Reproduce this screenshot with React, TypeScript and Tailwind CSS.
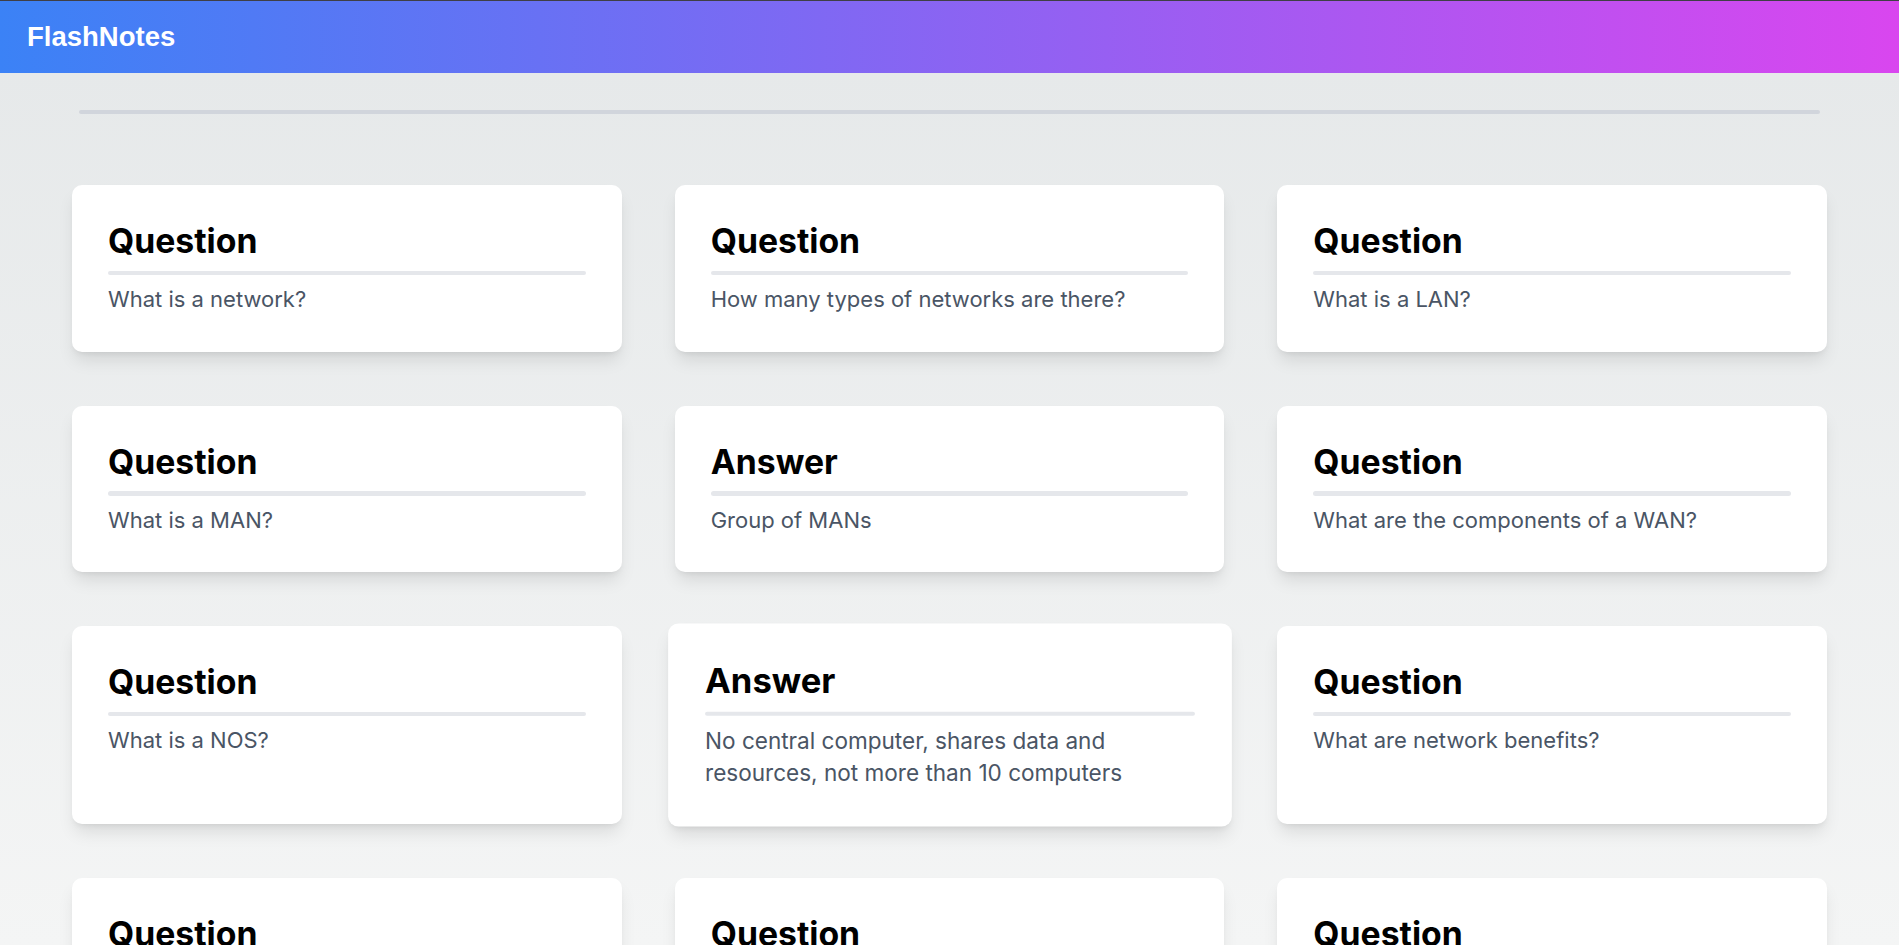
const cards = [
  { side: 'Question', text: 'What is a network?' },
  { side: 'Question', text: 'How many types of networks are there?' },
  { side: 'Question', text: 'What is a LAN?' },
  { side: 'Question', text: 'What is a MAN?' },
  { side: 'Answer', text: 'Group of MANs' },
  { side: 'Question', text: 'What are the components of a WAN?' },
  { side: 'Question', text: 'What is a NOS?' },
  { side: 'Answer', text: 'No central computer, shares data and resources, not more than 10 computers', active: true },
  { side: 'Question', text: 'What are network benefits?' },
  { side: 'Question', text: 'What is a peer-to-peer network?' },
  { side: 'Question', text: 'What is a client/server network?' },
  { side: 'Question', text: 'What is a network topology?' },
];

function Card({ side, text, active }: { side: string; text: string; active?: boolean }) {
  return (
    <div
      className={
        'rounded-[10px] bg-white p-[36px] shadow-[0_11px_17px_-3px_rgba(0,0,0,0.1),0_4.5px_7px_-4.5px_rgba(0,0,0,0.1)] ' +
        (active ? 'scale-[1.025]' : '')
      }
    >
      <h2 className="text-[33.75px] leading-[40.5px] font-bold text-black">{side}</h2>
      <div className="mt-[9px] h-[4.5px] rounded-full bg-gray-200" />
      <p className="mt-[9px] text-[22px] leading-[31.5px] text-gray-600">{text}</p>
    </div>
  );
}

export default function App() {
  return (
    <div className="min-h-screen font-['Inter',sans-serif] bg-[linear-gradient(180deg,#e5e8e9_0px,#f4f5f5_945px,#f6f7f7_100%)]">
      <header className="flex h-[73px] items-center border-t border-[#3f3f46] bg-[linear-gradient(to_right,#3b82f6,#d946ef)] px-[27px]">
        <h1 className="font-['Liberation_Sans',Arial,sans-serif] text-[27.5px] font-bold text-white">FlashNotes</h1>
      </header>

      <main className="px-[72px] pb-[72px]">
        <div className="mx-[7px] mt-[37px] h-[4px] rounded-full bg-gray-300" />

        <div className="mt-[71px] grid grid-cols-3 gap-x-[53px] gap-y-[54px]">
          {cards.map((c, i) => (
            <Card key={i} {...c} />
          ))}
        </div>
      </main>
    </div>
  );
}
